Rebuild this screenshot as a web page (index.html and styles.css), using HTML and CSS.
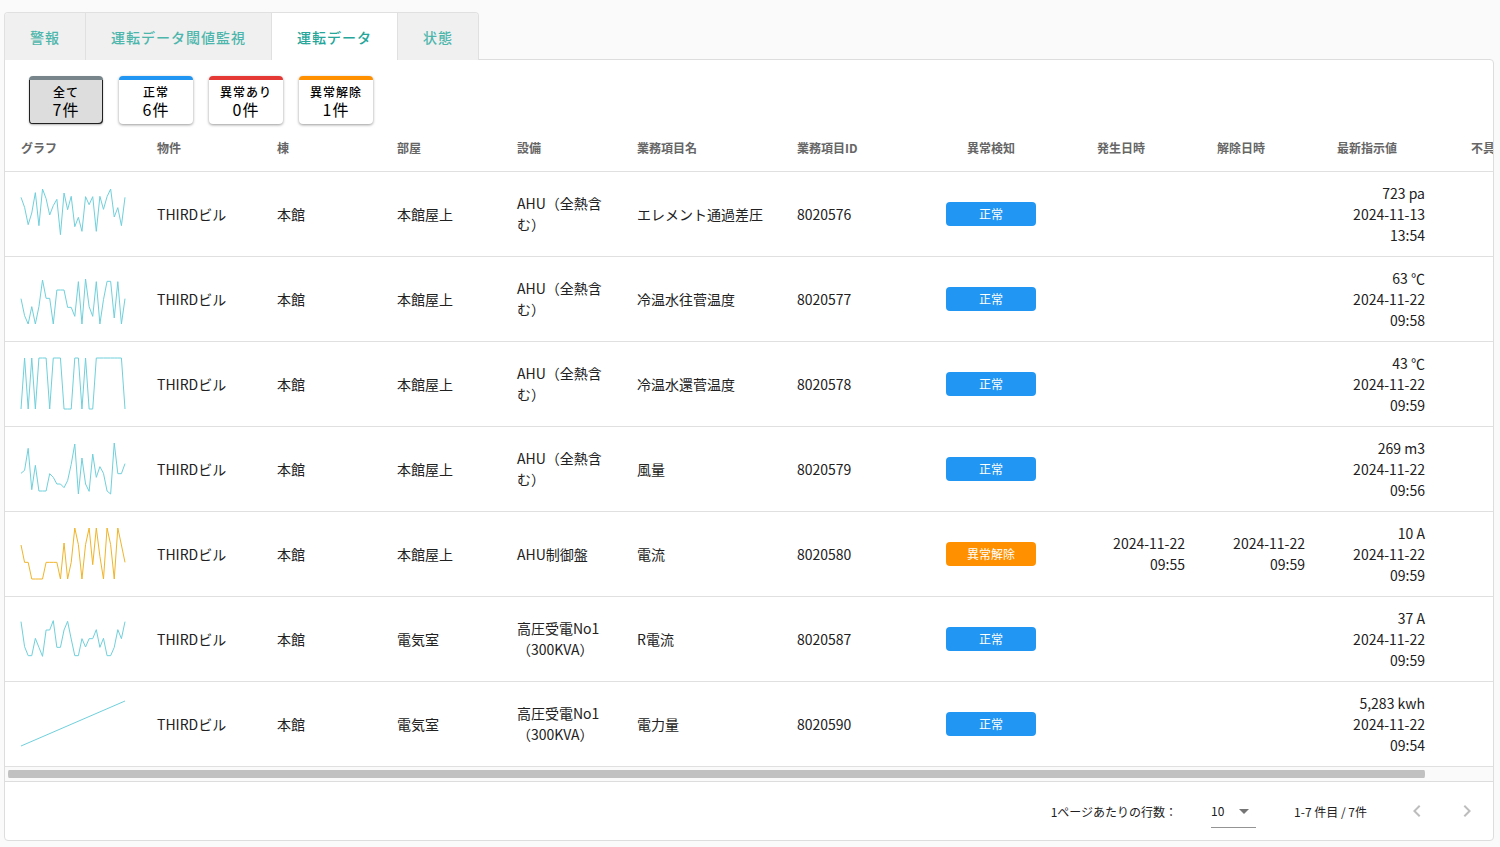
FILE: index.html
```html
<!DOCTYPE html>
<html lang="ja">
<head>
    <meta charset="UTF-8">
    <title>運転データ</title>
    <link rel="stylesheet" href="styles.css">
</head>
<body>
    <nav class="tabs">
        <a href="#" class="tab">警報</a>
        <a href="#" class="tab">運転データ閾値監視</a>
        <a href="#" class="tab active">運転データ</a>
        <a href="#" class="tab">状態</a>
    </nav>

    <main class="panel">
        <div class="filters">
            <button type="button" class="filter all selected"><span>全て</span><strong>7件</strong></button>
            <button type="button" class="filter normal"><span>正常</span><strong>6件</strong></button>
            <button type="button" class="filter error"><span>異常あり</span><strong>0件</strong></button>
            <button type="button" class="filter cleared"><span>異常解除</span><strong>1件</strong></button>
        </div>

        <div class="table-scroll">
            <table class="data-table">
                <colgroup>
                    <col class="col-graph">
                    <col span="4">
                    <col class="col-item">
                    <col>
                    <col class="col-status">
                    <col span="4">
                </colgroup>
                <thead>
                    <tr>
                        <th>グラフ</th>
                        <th>物件</th>
                        <th>棟</th>
                        <th>部屋</th>
                        <th>設備</th>
                        <th>業務項目名</th>
                        <th>業務項目ID</th>
                        <th class="center">異常検知</th>
                        <th>発生日時</th>
                        <th>解除日時</th>
                        <th>最新指示値</th>
                        <th class="center">不具合登録</th>
                    </tr>
                </thead>
                <tbody>
                    <tr>
                        <td><svg class="spark" data-values="28 58 110 75 14 113 3 32 81 53 34 140 15 65 25 116 88 130 26 50 26 130 25 64 26 3 87 59 113 28"></svg></td>
                        <td>THIRDビル</td>
                        <td>本館</td>
                        <td>本館屋上</td>
                        <td>AHU&#xFF08;全熱含む&#xFF09;</td>
                        <td>エレメント通過差圧</td>
                        <td>8020576</td>
                        <td class="center"><span class="badge">正常</span></td>
                        <td class="right"></td>
                        <td class="right"></td>
                        <td class="right">723 pa<br>2024-11-13 13:54</td>
                        <td></td>
                    </tr>
                    <tr>
                        <td><svg class="spark" data-values="77 128 153 101 153 101 21 76 76 153 51 51 51 103 103 130 26 153 18 101 130 26 153 80 25 25 135 26 153 77"></svg></td>
                        <td>THIRDビル</td>
                        <td>本館</td>
                        <td>本館屋上</td>
                        <td>AHU&#xFF08;全熱含む&#xFF09;</td>
                        <td>冷温水往菅温度</td>
                        <td>8020577</td>
                        <td class="center"><span class="badge">正常</span></td>
                        <td class="right"></td>
                        <td class="right"></td>
                        <td class="right">63 ℃<br>2024-11-22 09:58</td>
                        <td></td>
                    </tr>
                    <tr>
                        <td><svg class="spark" data-values="153 0 153 0 153 0 0 0 153 0 0 0 153 153 153 0 0 153 0 153 153 0 0 0 0 0 0 0 0 153"></svg></td>
                        <td>THIRDビル</td>
                        <td>本館</td>
                        <td>本館屋上</td>
                        <td>AHU&#xFF08;全熱含む&#xFF09;</td>
                        <td>冷温水還菅温度</td>
                        <td>8020578</td>
                        <td class="center"><span class="badge">正常</span></td>
                        <td class="right"></td>
                        <td class="right"></td>
                        <td class="right">43 ℃<br>2024-11-22 09:59</td>
                        <td></td>
                    </tr>
                    <tr>
                        <td><svg class="spark" data-values="91 82 16 140 67 144 144 144 92 103 123 123 134 113 64 3 153 45 123 145 33 103 71 91 144 153 0 92 92 62"></svg></td>
                        <td>THIRDビル</td>
                        <td>本館</td>
                        <td>本館屋上</td>
                        <td>AHU&#xFF08;全熱含む&#xFF09;</td>
                        <td>風量</td>
                        <td>8020579</td>
                        <td class="center"><span class="badge">正常</span></td>
                        <td class="right"></td>
                        <td class="right"></td>
                        <td class="right">269 m3<br>2024-11-22 09:56</td>
                        <td></td>
                    </tr>
                    <tr>
                        <td><svg class="spark cleared" data-values="51 103 103 153 153 153 153 103 103 103 103 153 45 153 103 0 50 153 50 0 110 0 85 153 0 50 153 0 51 103"></svg></td>
                        <td>THIRDビル</td>
                        <td>本館</td>
                        <td>本館屋上</td>
                        <td>AHU制御盤</td>
                        <td>電流</td>
                        <td>8020580</td>
                        <td class="center"><span class="badge cleared">異常解除</span></td>
                        <td class="right">2024-11-22 09:55</td>
                        <td class="right">2024-11-22 09:59</td>
                        <td class="right">10 A<br>2024-11-22 09:59</td>
                        <td></td>
                    </tr>
                    <tr>
                        <td><svg class="spark" data-values="26 101 128 128 76 103 130 51 51 23 103 103 51 25 78 128 128 77 102 77 77 50 103 76 128 128 103 50 77 26"></svg></td>
                        <td>THIRDビル</td>
                        <td>本館</td>
                        <td>電気室</td>
                        <td>高圧受電No1&#xFF08;300KVA&#xFF09;</td>
                        <td>R電流</td>
                        <td>8020587</td>
                        <td class="center"><span class="badge">正常</span></td>
                        <td class="right"></td>
                        <td class="right"></td>
                        <td class="right">37 A<br>2024-11-22 09:59</td>
                        <td></td>
                    </tr>
                    <tr>
                        <td><svg class="spark" data-values="144 9"></svg></td>
                        <td>THIRDビル</td>
                        <td>本館</td>
                        <td>電気室</td>
                        <td>高圧受電No1&#xFF08;300KVA&#xFF09;</td>
                        <td>電力量</td>
                        <td>8020590</td>
                        <td class="center"><span class="badge">正常</span></td>
                        <td class="right"></td>
                        <td class="right"></td>
                        <td class="right">5,283 kwh<br>2024-11-22 09:54</td>
                        <td></td>
                    </tr>
                </tbody>
            </table>
        </div>
        <div class="scrollbar"><div class="scrollbar-thumb"></div></div>

        <div class="pager">
            <label for="rows">1ページあたりの行数&#xFF1A;</label>
            <div class="select-wrap">
                <select id="rows">
                    <option>10</option>
                    <option>25</option>
                    <option>50</option>
                </select>
            </div>
            <span class="range">1-7 件目 / 7件</span>
            <button type="button" class="page-button" aria-label="前のページ" disabled>
                <svg viewBox="0 0 24 24"><path d="M15.41 7.41 14 6l-6 6 6 6 1.41-1.41L10.83 12z"/></svg>
            </button>
            <button type="button" class="page-button" aria-label="次のページ" disabled>
                <svg viewBox="0 0 24 24"><path d="M8.59 16.59 13.17 12 8.59 7.41 10 6l6 6-6 6z"/></svg>
            </button>
        </div>
    </main>

    <script>
        // グラフ描画
        document.querySelectorAll('.spark').forEach(svg => {
            const values = svg.dataset.values.split(' ').map(Number);
            const line = document.createElementNS('http://www.w3.org/2000/svg', 'polyline');
            svg.setAttribute('viewBox', `0 0 ${values.length - 1} 156`);
            svg.setAttribute('preserveAspectRatio', 'none');
            line.setAttribute('points', values.map((v, i) => `${i},${v}`).join(' '));
            svg.appendChild(line);
        });

        // スクロールバー
        const scroller = document.querySelector('.table-scroll');
        const bar = document.querySelector('.scrollbar');
        const thumb = document.querySelector('.scrollbar-thumb');

        function updateThumb() {
            const ratio = bar.clientWidth / scroller.scrollWidth;
            thumb.style.width = `${ratio * 100}%`;
            thumb.style.marginLeft = `${scroller.scrollLeft * ratio}px`;
        }

        scroller.addEventListener('scroll', updateThumb);
        window.addEventListener('resize', updateThumb);
        updateThumb();
    </script>
</body>
</html>
```
FILE: styles.css
```css
* {
    box-sizing: border-box;
}

body {
    margin: 0;
    padding: 12px 6px 6px 4px;
    background-color: #fafafa;
    color: #212121;
    font-family: "Noto Sans CJK JP", sans-serif;
    font-size: 14px;
    line-height: 21px;
}

button,
select {
    font-family: inherit;
    color: inherit;
}

.tabs {
    display: flex;
    position: relative;
    z-index: 1;
    width: max-content;
    height: 48px;
    border: 1px solid #e0e0e0;
    border-bottom: none;
    border-radius: 4px 4px 0 0;
    overflow: hidden;
}

.tab {
    display: flex;
    align-items: center;
    padding: 1px 25px 0;
    background-color: #f0f0f0;
    color: #4db6ac;
    font-weight: 500;
    letter-spacing: 1px;
    text-decoration: none;
}

.tab + .tab {
    border-left: 1px solid #e0e0e0;
}

.tab.active {
    background-color: #ffffff;
    color: #26a69a;
}

.panel {
    margin-top: -1px;
    background-color: #ffffff;
    border: 1px solid #dddddd;
    border-radius: 0 4px 4px 4px;
}

.filters {
    display: flex;
    gap: 16px;
    padding: 16px 24px 0;
}

.filter {
    display: flex;
    flex-direction: column;
    align-items: center;
    width: 74px;
    height: 48px;
    padding: 3px 0 0;
    background-color: #ffffff;
    border: none;
    border-top: 4px solid #2196f3;
    border-radius: 4px;
    box-shadow: 0 1px 3px rgba(0, 0, 0, 0.4);
    color: #000000;
    letter-spacing: 1px;
    cursor: pointer;
}

.filter span {
    font-size: 12px;
    font-weight: 500;
    line-height: 17px;
}

.filter strong {
    font-size: 16px;
    font-weight: 400;
    line-height: 18px;
}

.filter.error {
    border-top-color: #e53935;
}

.filter.cleared {
    border-top-color: #ff9100;
}

.filter.all {
    border-top-color: #78868b;
}

.filter.selected {
    background-color: #dddddd;
    box-shadow: inset 1px 0 #212121, inset -1px -1px #212121, 0 1px 2px rgba(0, 0, 0, 0.3);
}

.table-scroll {
    overflow-x: auto;
    scrollbar-width: none;
}

.scrollbar {
    height: 14px;
    padding: 3px 0;
    background-color: #fafafa;
}

.scrollbar-thumb {
    height: 8px;
    background-color: #c1c1c1;
    background-clip: padding-box;
    border: solid transparent;
    border-width: 0 3px;
    border-radius: 7px;
}

.data-table {
    width: 1556px;
    table-layout: fixed;
    border-collapse: separate;
    border-spacing: 0;
}

.data-table col {
    width: 120px;
}

.data-table .col-graph {
    width: 136px;
}

.data-table .col-item {
    width: 160px;
}

.data-table .col-status {
    width: 180px;
}

th,
td {
    padding: 0 16px;
    border-bottom: 1px solid #e0e0e0;
    text-align: left;
}

th {
    height: 48px;
    color: #666666;
    font-size: 12px;
    font-weight: 700;
    white-space: nowrap;
}

td {
    height: 85px;
}

.center {
    text-align: center;
}

.right {
    text-align: right;
}

.spark {
    display: block;
    width: 104px;
    height: 52px;
    overflow: visible;
}

.spark polyline {
    fill: none;
    stroke: #6fd0dc;
    stroke-width: 1;
    vector-effect: non-scaling-stroke;
}

.spark.cleared polyline {
    stroke: #f0b429;
}

.badge {
    display: block;
    width: 90px;
    margin: 0 auto;
    background-color: #2196f3;
    border-radius: 4px;
    color: #ffffff;
    font-size: 12px;
    line-height: 24px;
}

.badge.cleared {
    background-color: #ff9100;
}

.pager {
    display: flex;
    justify-content: flex-end;
    align-items: center;
    height: 59px;
    padding-right: 8px;
    border-top: 1px solid #dddddd;
    font-size: 12px;
}

.select-wrap {
    position: relative;
    margin: 0 38px 0 34px;
}

.select-wrap::after {
    content: '';
    position: absolute;
    top: 14px;
    right: 7px;
    border: 5px solid transparent;
    border-top-color: #757575;
    border-bottom: none;
    pointer-events: none;
}

.select-wrap select {
    display: block;
    width: 45px;
    height: 33px;
    padding: 0;
    appearance: none;
    background: none;
    border: none;
    border-bottom: 1px solid #949494;
    border-radius: 0;
    font-size: 12px;
}

.range {
    margin-right: 32px;
}

.page-button {
    display: flex;
    justify-content: center;
    align-items: center;
    width: 36px;
    height: 36px;
    padding: 0;
    background: none;
    border: none;
}

.page-button + .page-button {
    margin-left: 14px;
}

.page-button svg {
    width: 24px;
    height: 24px;
    fill: #bdbdbd;
}
```
